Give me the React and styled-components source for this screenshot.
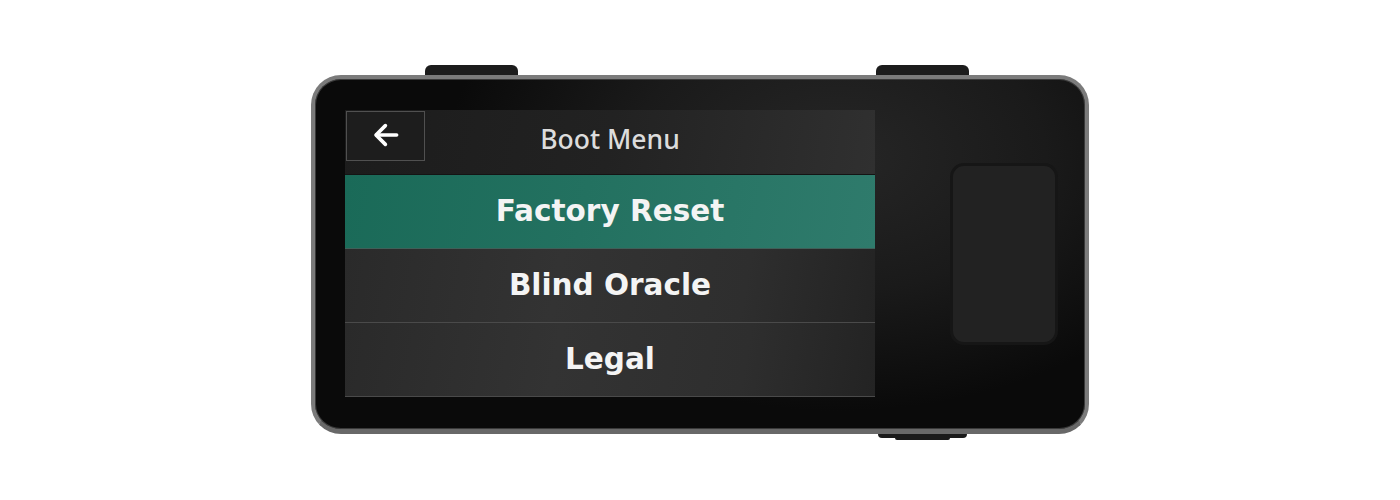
import React from "react";
import styled, { createGlobalStyle } from "styled-components";

const Global = createGlobalStyle`
  html, body { margin: 0; padding: 0; background: #ffffff; }
  body { font-family: "DejaVu Sans", sans-serif; }
`;

const Stage = styled.div`
  width: 1400px;
  height: 500px;
  display: flex;
  justify-content: center;
  padding-top: 65px;
  box-sizing: border-box;
`;

const DeviceColumn = styled.div`
  width: 778px;
  display: flex;
  flex-direction: column;
`;

const TabRow = styled.div`
  display: flex;
  height: 10px;
  padding-left: ${(p) => p.$offset}px;
  gap: ${(p) => p.$gap || 0}px;
`;

const TopTab = styled.div`
  width: 93px;
  height: 10px;
  background: #1c1c1c;
  border-radius: 6px 6px 0 0;
`;

const BottomTab = styled.div`
  width: 89px;
  height: 4px;
  background: #1a1a1a;
  border-radius: 0 0 6px 6px;
  display: flex;
  justify-content: center;
`;

const BottomTabNub = styled.div`
  margin-top: 4px;
  width: 55px;
  height: 2px;
  background: #1a1a1a;
  border-radius: 0 0 3px 3px;
`;

const Device = styled.div`
  height: 359px;
  box-sizing: border-box;
  border: 4px solid #7b7b7b;
  border-bottom-width: 5px;
  border-bottom-color: #686868;
  border-radius: 30px;
  background: radial-gradient(
    ellipse 460px 300px at 68% 22%,
    #262626 0%,
    #1a1a1a 45%,
    #0a0a0a 85%
  );
  display: flex;
  align-items: center;
  padding-left: 30px;
  gap: 75px;
  box-shadow: inset 0 0 0 1px #3a3a3a;
`;

const Screen = styled.div`
  width: 530px;
  height: 287px;
  margin-top: -2px;
  display: flex;
  flex-direction: column;
  background: #2a2a2a;
`;

const Header = styled.div`
  height: 64px;
  flex-shrink: 0;
  display: grid;
  grid-template-columns: 80px 1fr 80px;
  align-items: start;
  background: linear-gradient(100deg, #1c1c1c 0%, #222 50%, #303030 100%);
  border-bottom: 1px solid #141414;
`;

const BackButton = styled.div`
  margin: 1px 0 0 1px;
  width: 79px;
  height: 50px;
  box-sizing: border-box;
  border: 1px solid #505050;
  background: #1d1d1d;
  display: flex;
  align-items: center;
  justify-content: center;
  padding-bottom: 2px;
`;

const Title = styled.div`
  font-family: "Noto Sans", sans-serif;
  font-weight: 500;
  font-size: 26.5px;
  color: #dcdcdc;
  text-align: center;
  line-height: 58px;
`;

const Row = styled.div`
  height: 72px;
  flex-shrink: 0;
  display: flex;
  align-items: center;
  justify-content: center;
  border-bottom: 1px solid ${(p) => (p.$active ? "#3f5f58" : "#4a4a4a")};
  background: ${(p) =>
    p.$active
      ? "linear-gradient(100deg, #1a6a58 0%, #237160 45%, #2f7b6c 100%)"
      : "linear-gradient(100deg, #2a2a2a 0%, #333333 40%, #2e2e2e 75%, #232323 100%)"};
  font-family: "DejaVu Sans", sans-serif;
  font-weight: bold;
  font-size: 29.5px;
  color: #f4f4f4;
  padding-bottom: 1px;
`;

const BottomStrip = styled.div`
  flex: 1;
  background: #2b2b2b;
`;

const SideButton = styled.div`
  width: 108px;
  height: 182px;
  box-sizing: border-box;
  border: 3px solid #161616;
  border-radius: 14px;
  background: #222222;
`;

const ArrowIcon = () => (
  <svg width="30" height="30" viewBox="0 0 24 24" fill="none" stroke="#ffffff" strokeWidth="2.9" strokeLinecap="round" strokeLinejoin="round">
    <path d="M20.5 12H4.5" />
    <path d="M11.5 19.5L4 12l7.5-7.5" />
  </svg>
);

export default function App() {
  const items = ["Factory Reset", "Blind Oracle", "Legal"];
  return (
    <>
      <Global />
      <Stage>
        <DeviceColumn>
          <TabRow $offset={114} $gap={358}>
            <TopTab />
            <TopTab />
          </TabRow>
          <Device>
            <Screen>
              <Header>
                <BackButton>
                  <ArrowIcon />
                </BackButton>
                <Title>Boot Menu</Title>
              </Header>
              {items.map((t, i) => (
                <Row key={t} $active={i === 0}>
                  {t}
                </Row>
              ))}
              <BottomStrip />
            </Screen>
            <SideButton />
          </Device>
          <TabRow $offset={567}>
            <BottomTab>
              <BottomTabNub />
            </BottomTab>
          </TabRow>
        </DeviceColumn>
      </Stage>
    </>
  );
}
